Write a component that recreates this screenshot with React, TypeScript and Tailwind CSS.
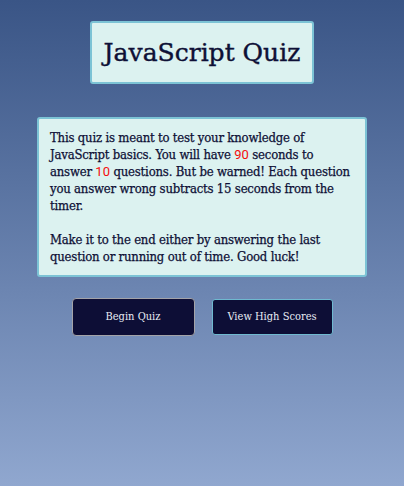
const slab = { fontFamily: "'DejaVu Serif Condensed', 'DejaVu Serif', serif" };
const num = { fontFamily: "Roboto, 'Liberation Sans', sans-serif" };

export default function App() {
  return (
    <div
      className="min-h-[486px] w-full bg-gradient-to-b from-[#3a5586] to-[#90a7cf] flex flex-col items-center pt-[21px] text-[#0e1036]"
      style={slab}
    >
      <h1
        className="w-[224px] h-[63px] flex items-center justify-center rounded-[3px] border-2 border-[#7cc3d5] bg-[#dcf2f0] text-[25px] leading-none [-webkit-text-stroke:0.4px_#0e1036]"
        style={{ fontFamily: "'DejaVu Serif', serif" }}
      >
        JavaScript Quiz
      </h1>

      <div className="mt-[33px] w-[330px] rounded-[3px] border-2 border-[#7cc3d5] bg-[#dcf2f0] px-[11px] py-[10px] text-[13px] leading-[17px] tracking-[-0.2px] whitespace-nowrap [-webkit-text-stroke:0.25px_#0e1036]">
        <p>
          This quiz is meant to test your knowledge of
          <br />
          JavaScript basics. You will have{" "}
          <span className="text-[#f50c0c] tracking-normal [-webkit-text-stroke:0px]" style={num}>
            90
          </span>{" "}
          seconds to
          <br />
          answer{" "}
          <span className="text-[#f50c0c] tracking-normal [-webkit-text-stroke:0px]" style={num}>
            10
          </span>{" "}
          questions. But be warned! Each question
          <br />
          you answer wrong subtracts 15 seconds from the
          <br />
          timer.
        </p>
        <p className="mt-[17px]">
          Make it to the end either by answering the last
          <br />
          question or running out of time. Good luck!
        </p>
      </div>

      <div className="mt-[21px] flex items-center gap-[17px]">
        <button className="w-[123px] h-[38px] rounded-[4px] border border-[#a3a3a8] bg-[#0d0e36] text-[11px] text-[#e8ecf4]">
          Begin Quiz
        </button>
        <button className="w-[121px] h-[36px] rounded-[3px] border border-[#6fb9d0] bg-[#0d0e36] text-[11px] text-[#e8ecf4]">
          View High Scores
        </button>
      </div>
    </div>
  );
}
